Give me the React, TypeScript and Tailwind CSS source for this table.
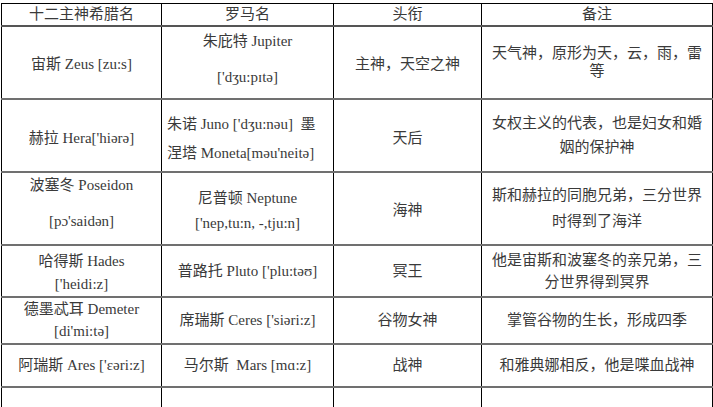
const font = "font-['Liberation_Serif','Noto_Sans_CJK_SC',serif]"

type Cell = {
  lines: string[]
  gap?: string
  align?: 'center' | 'left'
  shift?: string
}

type Row = {
  height: string
  cells: Cell[]
}

const rows: Row[] = [
  {
    height: 'h-[73px]',
    cells: [
      { lines: ['宙斯 Zeus [zu:s]'], shift: 'translate-y-[2px]' },
      { lines: ['朱庇特 Jupiter', "['dʒu:pɪtə]"], gap: 'gap-[16px]', shift: '-translate-y-[3px]' },
      { lines: ['主神，天空之神'], shift: 'translate-y-[2px]' },
      { lines: ['天气神，原形为天，云，雨，雷', '等'], gap: '-space-y-[2px]' },
    ],
  },
  {
    height: 'h-[73px]',
    cells: [
      { lines: ["赫拉 Hera['hiərə]"], shift: 'translate-y-[3px]' },
      {
        lines: ["朱诺 Juno ['dʒu:nəu]  墨", "涅塔 Moneta[məu'neitə]"],
        gap: 'gap-[9px]',
        align: 'left',
        shift: 'translate-y-[3px]',
      },
      { lines: ['天后'], shift: 'translate-y-[3px]' },
      { lines: ['女权主义的代表，也是妇女和婚', '姻的保护神'], gap: 'gap-[4px]' },
    ],
  },
  {
    height: 'h-[73px]',
    cells: [
      { lines: ['波塞冬 Poseidon', "[pɔ'saidən]"], gap: 'gap-[16px]', shift: '-translate-y-[5px]' },
      { lines: ['尼普顿 Neptune', "['nep,tu:n, -,tju:n]"], gap: 'gap-[5px]', shift: 'translate-y-[2px]' },
      { lines: ['海神'], shift: 'translate-y-[2px]' },
      { lines: ['斯和赫拉的同胞兄弟，三分世界', '时得到了海洋'], gap: 'gap-[6px]' },
    ],
  },
  {
    height: 'h-[52px]',
    cells: [
      { lines: ['哈得斯 Hades', "['heidi:z]"], gap: 'gap-[3px]', shift: 'translate-y-[2px]' },
      { lines: ["普路托 Pluto ['plu:təʊ]"] },
      { lines: ['冥王'] },
      { lines: ['他是宙斯和波塞冬的亲兄弟，三', '分世界得到冥界'], gap: 'gap-[2px]' },
    ],
  },
  {
    height: 'h-[47px]',
    cells: [
      { lines: ['德墨忒耳 Demeter', "[di'mi:tə]"], gap: 'gap-[2px]' },
      { lines: ["席瑞斯 Ceres ['siəri:z]"] },
      { lines: ['谷物女神'] },
      { lines: ['掌管谷物的生长，形成四季'] },
    ],
  },
  {
    height: 'h-[43px]',
    cells: [
      { lines: ["阿瑞斯 Ares ['ɛəri:z]"] },
      { lines: ['马尔斯  Mars [mɑ:z]'] },
      { lines: ['战神'] },
      { lines: ['和雅典娜相反，他是喋血战神'] },
    ],
  },
]

function TableCell({ cell }: { cell: Cell }) {
  return (
    <td className="border-x border-black p-0 align-middle">
      <div
        className={`flex flex-col justify-center px-[5px] ${cell.gap ?? ''} ${cell.shift ?? ''} ${
          cell.align === 'left' ? 'items-start' : 'items-center'
        }`}
      >
        {cell.lines.map((line) => (
          <div className="whitespace-pre leading-[20px]" key={line}>
            {line}
          </div>
        ))}
      </div>
    </td>
  )
}

export default function App() {
  return (
    <div className="h-[407px] w-[713px] overflow-hidden bg-white pl-[1px] pt-[3px]">
      <table
        className={`w-[711px] table-fixed border-collapse text-[15px] text-[#3a3a3a] ${font}`}
      >
        <colgroup>
          <col className="w-[160px]" />
          <col className="w-[172px]" />
          <col className="w-[148px]" />
          <col className="w-[231px]" />
        </colgroup>
        <tbody>
          <tr className="h-[22px] border-t border-b-2 border-t-black border-b-[#555]">
            {['十二主神希腊名', '罗马名', '头衔', '备注'].map((title) => (
              <td
                className="border-x border-black p-0 text-center align-middle leading-[20px]"
                key={title}
              >
                {title}
              </td>
            ))}
          </tr>
          {rows.map((row, index) => (
            <tr
              className={`${row.height} border-b-2 border-b-[#707070]`}
              key={index}
            >
              {row.cells.map((cell, cellIndex) => (
                <TableCell cell={cell} key={cellIndex} />
              ))}
            </tr>
          ))}
          <tr className="h-[30px]">
            {[0, 1, 2, 3].map((key) => (
              <td className="border-x border-black p-0" key={key} />
            ))}
          </tr>
        </tbody>
      </table>
    </div>
  )
}
